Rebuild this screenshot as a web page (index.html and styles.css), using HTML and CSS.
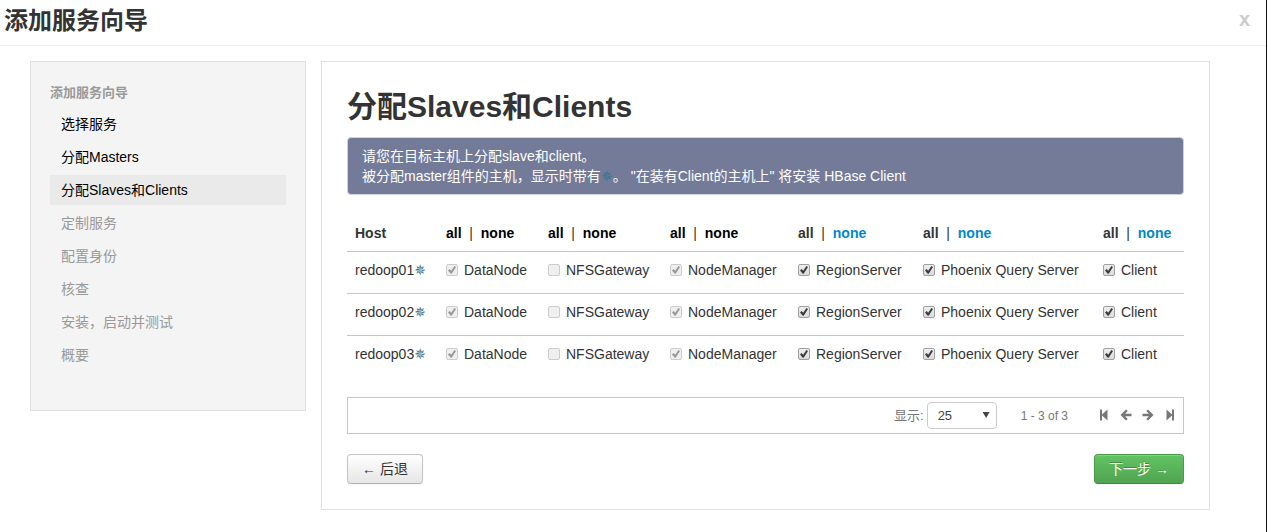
FILE: index.html
```html
<!DOCTYPE html>
<html lang="zh-CN">
<head>
<meta charset="utf-8">
<title>添加服务向导</title>
<link rel="stylesheet" href="styles.css">
</head>
<body>
<header class="modal-header">
  <h1 class="modal-title">添加服务向导</h1>
  <button class="close" type="button" aria-label="关闭">x</button>
</header>
<div class="modal-body">
  <nav class="sidebar">
    <h2 class="nav-header">添加服务向导</h2>
    <ul class="nav-list">
      <li><a class="step done" href="#">选择服务</a></li>
      <li><a class="step done" href="#">分配Masters</a></li>
      <li><a class="step done active" href="#">分配Slaves和Clients</a></li>
      <li><a class="step" href="#">定制服务</a></li>
      <li><a class="step" href="#">配置身份</a></li>
      <li><a class="step" href="#">核查</a></li>
      <li><a class="step" href="#">安装，启动并测试</a></li>
      <li><a class="step" href="#">概要</a></li>
    </ul>
  </nav>
  <main class="panel">
    <h2 class="panel-title">分配Slaves和Clients</h2>
    <div class="alert">请您在目标主机上分配slave和client。<br>被分配master组件的主机，显示时带有<span class="star">✵</span>。 "在装有Client的主机上" 将安装 HBase Client</div>
    <table class="hosts">
      <colgroup><col class="c-host"><col class="c-data"><col class="c-nfs"><col class="c-node"><col class="c-region"><col class="c-phoenix"><col class="c-client"></colgroup>
      <thead>
        <tr>
          <th>Host</th>
          <th><a class="off" href="#">all</a>&nbsp; <span class="bar">|</span> &nbsp;<a class="off" href="#">none</a></th>
          <th><a class="off" href="#">all</a>&nbsp; <span class="bar">|</span> &nbsp;<a class="off" href="#">none</a></th>
          <th><a class="off" href="#">all</a>&nbsp; <span class="bar">|</span> &nbsp;<a class="off" href="#">none</a></th>
          <th><a class="current" href="#">all</a>&nbsp; <span class="bar">|</span> &nbsp;<a class="link" href="#">none</a></th>
          <th><a class="current" href="#">all</a>&nbsp; <span class="bar">|</span> &nbsp;<a class="link" href="#">none</a></th>
          <th><a class="current" href="#">all</a>&nbsp; <span class="bar">|</span> &nbsp;<a class="link" href="#">none</a></th>
        </tr>
      </thead>
      <tbody>
        <tr>
          <td>redoop01<span class="star">✵</span></td>
          <td><label class="check"><input type="checkbox" checked disabled>DataNode</label></td>
          <td><label class="check"><input type="checkbox" disabled>NFSGateway</label></td>
          <td><label class="check"><input type="checkbox" checked disabled>NodeManager</label></td>
          <td><label class="check"><input type="checkbox" checked>RegionServer</label></td>
          <td><label class="check"><input type="checkbox" checked>Phoenix Query Server</label></td>
          <td><label class="check"><input type="checkbox" checked>Client</label></td>
        </tr>
        <tr>
          <td>redoop02<span class="star">✵</span></td>
          <td><label class="check"><input type="checkbox" checked disabled>DataNode</label></td>
          <td><label class="check"><input type="checkbox" disabled>NFSGateway</label></td>
          <td><label class="check"><input type="checkbox" checked disabled>NodeManager</label></td>
          <td><label class="check"><input type="checkbox" checked>RegionServer</label></td>
          <td><label class="check"><input type="checkbox" checked>Phoenix Query Server</label></td>
          <td><label class="check"><input type="checkbox" checked>Client</label></td>
        </tr>
        <tr>
          <td>redoop03<span class="star">✵</span></td>
          <td><label class="check"><input type="checkbox" checked disabled>DataNode</label></td>
          <td><label class="check"><input type="checkbox" disabled>NFSGateway</label></td>
          <td><label class="check"><input type="checkbox" checked disabled>NodeManager</label></td>
          <td><label class="check"><input type="checkbox" checked>RegionServer</label></td>
          <td><label class="check"><input type="checkbox" checked>Phoenix Query Server</label></td>
          <td><label class="check"><input type="checkbox" checked>Client</label></td>
        </tr>
      </tbody>
    </table>
    <div class="pager">
      <label class="page-label" for="page-size">显示:</label>
      <div class="select-wrap">
        <select id="page-size"><option>10</option><option selected>25</option><option>50</option></select>
      </div>
      <span class="page-info">1 - 3 of 3</span>
      <div class="page-nav">
        <button type="button" aria-label="首页"><svg viewBox="0 0 12 12"><path d="M2 .5h2v4.900L9.500.5v11L4 6.600v4.900H2z"/></svg></button>
        <button type="button" aria-label="上一页"><svg viewBox="0 0 12 12"><path d="M.5 6 6 .4l1.700 1.700L5.100 4.700h6.400v2.600H5.100l2.600 2.600L6 11.600z"/></svg></button>
        <button type="button" aria-label="下一页"><svg viewBox="0 0 12 12"><path d="M11.500 6 6 .4 4.300 2.100l2.600 2.600H.5v2.600h6.400L4.300 9.900 6 11.600z"/></svg></button>
        <button type="button" aria-label="末页"><svg viewBox="0 0 12 12"><path d="M10 .5H8v4.900L2.500.5v11L8 6.600v4.900h2z"/></svg></button>
      </div>
    </div>
    <div class="actions">
      <button class="btn" type="button">← 后退</button>
      <button class="btn btn-success" type="button">下一步 →</button>
    </div>
  </main>
</div>
</body>
</html>
```
FILE: styles.css
```css
* { box-sizing: border-box; }

body {
  margin: 0;
  min-height: 100vh;
  border-right: 1px solid #111;
  background: #fff;
  color: #333;
  font: 14px/20px "Liberation Sans", Arial, "Noto Sans CJK SC", sans-serif;
}

h1, h2, ul { margin: 0; padding: 0; }
a { text-decoration: none; }
button, select { font-family: inherit; }

.modal-header {
  display: flex;
  align-items: center;
  justify-content: space-between;
  height: 46px;
  padding: 0 16px 4px 4px;
  border-bottom: 1px solid #eee;
}
.modal-title { font-size: 24px; line-height: 30px; }
.close {
  padding: 0 0 4px;
  border: 0;
  background: none;
  color: #ccc;
  font-size: 20px;
  font-weight: bold;
  line-height: 20px;
}

.modal-body {
  display: flex;
  align-items: flex-start;
  gap: 15px;
  padding: 15px 56px 22px 30px;
}

.sidebar {
  flex: 0 0 276px;
  padding: 20px 19px 40px;
  border: 1px solid #e0e0e0;
  background: #f4f4f4;
}
.nav-header {
  margin-bottom: 6px;
  color: #999;
  font-size: 13px;
  line-height: 21px;
}
.nav-list {
  display: flex;
  flex-direction: column;
  gap: 3px;
  list-style: none;
}
.step {
  display: block;
  padding: 5px 11px;
  color: #999;
}
.step.done { color: #000; }
.step.active { background: #eaeaea; }

.panel {
  flex: 1;
  min-width: 0;
  padding: 25px;
  border: 1px solid #e0e0e0;
}
.panel-title {
  margin-bottom: 10px;
  font-size: 30px;
  line-height: 40px;
}
.alert {
  margin-bottom: 20px;
  padding: 8px 14px;
  border: 1px solid #cdd3da;
  border-radius: 4px;
  background: #737b99;
  color: #fff;
}
.star {
  display: inline-block;
  width: 12px;
  color: #3a7390;
  font-family: "DejaVu Sans", sans-serif;
  font-size: 14px;
  line-height: 14px;
  text-align: center;
}

.hosts {
  width: 100%;
  margin-bottom: 20px;
  border-collapse: separate;
  border-spacing: 0;
  table-layout: fixed;
}
.c-host { width: 91px; }
.c-data { width: 102px; }
.c-nfs { width: 122px; }
.c-node { width: 128px; }
.c-region { width: 125px; }
.c-phoenix { width: 180px; }
.c-client { width: 89px; }
.hosts th {
  padding: 8px 0 8px 8px;
  text-align: left;
  white-space: nowrap;
}
.hosts td {
  height: 42px;
  padding: 8px 0 13px 8px;
  border-top: 1px solid #bccad6;
  white-space: nowrap;
}
.off { color: #000; }
.current { color: #333; }
.link { color: #08c; }
.bar { font-weight: normal; }

.check {
  display: flex;
  align-items: center;
  gap: 6px;
}
.check input {
  display: grid;
  place-items: center;
  appearance: none;
  width: 12px;
  height: 12px;
  margin: 0;
  border: 1px solid #a0a0a0;
  border-radius: 2px;
  background: linear-gradient(#eee, #dcdcdc);
}
.check input:checked::before {
  content: "";
  width: 8px;
  height: 8px;
  background: #3c3c3c;
  clip-path: polygon(0 55%, 20% 38%, 40% 58%, 80% 0, 100% 14%, 46% 96%, 34% 96%);
}
.check input:disabled {
  border-color: #ccc;
  background: #efefef;
}
.check input:disabled::before { background: #999; }

.pager {
  display: flex;
  align-items: center;
  justify-content: flex-end;
  padding: 4px 7px;
  border: 1px solid #bccad6;
  color: #777;
  font-size: 12px;
}
.page-label { margin-right: 3px; font-size: 13px; }
.select-wrap { position: relative; }
.select-wrap::after {
  content: "";
  position: absolute;
  top: 10px;
  right: 7px;
  width: 7px;
  height: 6px;
  background: #444;
  clip-path: polygon(0 0, 100% 0, 50% 100%);
  pointer-events: none;
}
.select-wrap select {
  display: block;
  appearance: none;
  width: 70px;
  height: 27px;
  padding: 0 10px;
  border: 1px solid #ccc;
  border-radius: 4px;
  background: #fff;
  color: #444;
  font-size: 13px;
}
.page-info { margin: 0 30px 0 24px; }
.page-nav { display: flex; gap: 10px; padding-bottom: 2px; }
.page-nav button {
  padding: 0;
  border: 0;
  background: none;
}
.page-nav svg {
  display: block;
  width: 12px;
  height: 12px;
  fill: #777;
}

.actions {
  display: flex;
  justify-content: space-between;
  margin-top: 20px;
}
.btn {
  padding: 4px 14px;
  border: 1px solid #c4c4c4;
  border-bottom-color: #b3b3b3;
  border-radius: 4px;
  background: linear-gradient(#fff, #e6e6e6);
  box-shadow: inset 0 1px 0 rgba(255, 255, 255, .2), 0 1px 2px rgba(0, 0, 0, .05);
  color: #333;
  font-size: 14px;
  line-height: 20px;
}
.btn-success {
  border-color: #4a9a4a;
  border-bottom-color: #3f863f;
  background: linear-gradient(#62c462, #51a351);
  color: #fff;
  text-shadow: 0 -1px 0 rgba(0, 0, 0, .25);
}
```
